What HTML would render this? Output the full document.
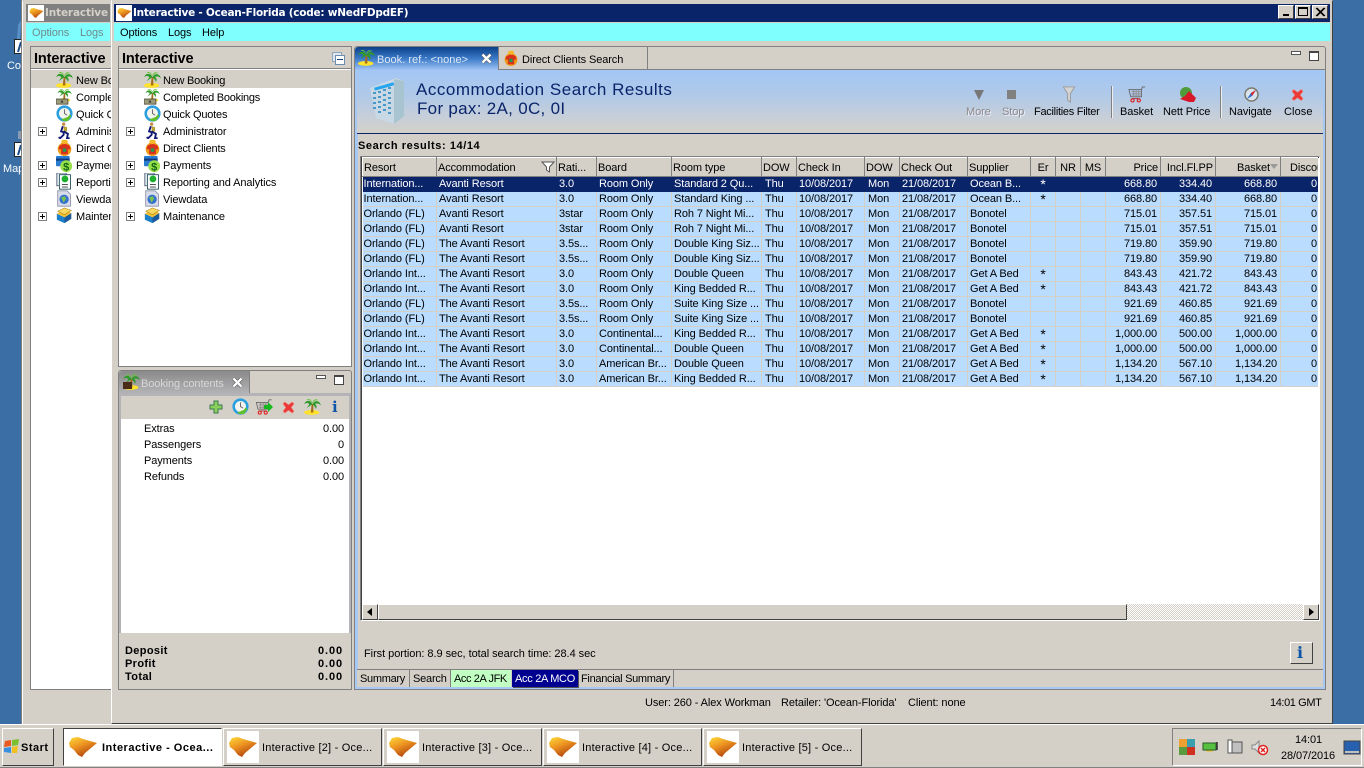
<!DOCTYPE html>
<html><head><meta charset="utf-8"><title>Interactive</title>
<style>
html,body{margin:0;padding:0;width:1364px;height:768px;overflow:hidden;background:#3a6ea5;font:11px "Liberation Sans",sans-serif;color:#000}
.a{position:absolute;box-sizing:border-box}
.t{position:absolute;white-space:nowrap;line-height:14px;height:14px;margin-top:1px;letter-spacing:-.1px}
svg.a{overflow:visible}
table{border-collapse:collapse;table-layout:fixed;position:absolute;left:0;top:0;width:974px}
td,th{padding:0 2px;height:15px;line-height:13px;font-weight:normal;font-size:11px;white-space:nowrap;overflow:hidden;text-align:left;box-sizing:border-box;letter-spacing:-.1px}
tbody td{border-right:1px solid #d4d0c8;border-bottom:1px solid #d4d0c8;background:#b9dcff}
tr.s td{background:#0a246a;color:#fff;border-color:#0a246a}
th{height:19px;padding:2px 1px 0;background:#d4d0c8;border-top:1px solid #fff;border-left:1px solid #fff;border-right:1px solid #808080;border-bottom:1px solid #808080}
td:first-child{padding-left:1px}
td.r{text-align:right;padding-right:3px}
th.r{text-align:right;padding-right:2px}
td.c,th.c{text-align:center}
td.c{font-size:14px;line-height:12px}
td.d{padding-left:3px}
td.z{padding-left:30px}
.bd{font-weight:bold;letter-spacing:.35px}
.n{font-weight:bold;letter-spacing:.9px}
.p{position:absolute;box-sizing:border-box;width:9px;height:9px;border:1px solid #808080;background:linear-gradient(#000,#000) center/5px 1px no-repeat,linear-gradient(#000,#000) center/1px 5px no-repeat,#fff}
.b{position:absolute;box-sizing:border-box;background:#d4d0c8;border:1px solid;border-color:#fff #404040 #404040 #fff}
</style></head><body>
<svg width="0" height="0" style="position:absolute">
<defs>
<linearGradient id="og" x1="0" y1="0" x2=".55" y2="1"><stop offset="0" stop-color="#ffdc3a"/><stop offset=".5" stop-color="#ec9220"/><stop offset="1" stop-color="#b04410"/></linearGradient>
<symbol id="logo" viewBox="0 0 28 20"><path d="M0 6 3 1 9 0 14 2 28 6 22 11 16 16 13 20 9 18 5 13 1 10Z" fill="url(#og)"/></symbol>
<symbol id="palm" viewBox="0 0 20 20"><ellipse cx="9" cy="17" rx="9" ry="2.800" fill="#ffe22a"/><path d="M9 7 8 17h3L11 7Z" fill="#a66a1c"/><path d="M10 7C7 2 3 2 0 7 4 5 6 6 6 8L3 12C7 9 9 8 10 7 11 9 13 9 14 13 16 9 14 8 13 7 15 6 18 6 20 9 19 4 14 1 10 7Z" fill="#2f9a2a"/><path d="M10 5C8 2 6 0 3 2 7 2 9 4 10 6 12 3 14 2 17 3 14 0 11 2 10 5Z" fill="#66c43a"/></symbol>
<symbol id="money" viewBox="0 0 20 20"><use href="#palm" width="20" height="17"/><rect x="0" y="13" width="14" height="6" fill="#9c9c7c" stroke="#4b4b3b"/><circle cx="7" cy="16" r="1.500" fill="#4b4b3b"/></symbol>
<symbol id="clock" viewBox="0 0 20 20"><circle cx="10" cy="10" r="9.500" fill="#2a9fe0"/><circle cx="10" cy="10" r="6.500" fill="#f4f4ee"/><path d="M10 5v5l3 2" stroke="#555" fill="none"/><path d="M6 17 14 14 16 11 18 13 14 19 9 19Z" fill="#63c02c"/></symbol>
<symbol id="run" viewBox="0 0 20 20"><circle cx="9" cy="2.500" r="2" fill="#c98a4a"/><path d="M9 5 13 6 13 11 9 11Z" fill="#b8a030"/><path d="M8 5 6 11 9 12 9 15 5 19 3 18M9 11 14 14 13 19 16 19" stroke="#101a70" stroke-width="2.200" fill="none"/></symbol>
<symbol id="shirt" viewBox="0 0 20 20"><circle cx="10" cy="12" r="8" fill="#f09a18"/><path d="M7 1h6l1 3-4 2-4-2Z" fill="#f5b82a"/><path d="M4 8 8 6h4l4 2 1 4-3 0V18H6V12L3 12Z" fill="#d8321c"/><rect x="8" y="11" width="4" height="4" fill="#1f9a50"/></symbol>
<symbol id="pay" viewBox="0 0 20 20"><rect x="0" y="0" width="16" height="12" rx="1" fill="#2a7cd0"/><rect x="0" y="3" width="16" height="2.500" fill="#0f3a80"/><circle cx="12" cy="12" r="7" fill="#9ae04a"/><text x="12" y="17" font-size="13" font-weight="bold" text-anchor="middle" fill="#116611" font-family="Liberation Sans">$</text></symbol>
<symbol id="rep" viewBox="0 0 20 20"><rect x="1" y="0" width="11" height="15" fill="#e8eef4" stroke="#40586c"/><rect x="4" y="2" width="13" height="17" fill="#fff" stroke="#1d4a5c"/><circle cx="10.500" cy="7" r="4" fill="#1fb030"/><rect x="7" y="13" width="7" height="1" fill="#333"/><rect x="7" y="16" width="7" height="1" fill="#333"/></symbol>
<symbol id="view" viewBox="0 0 20 20"><path d="M2 1h11l4 4v14H2Z" fill="#d8dce8" stroke="#8a8fa8"/><circle cx="9.500" cy="11" r="5.500" fill="#3470d0"/><path d="M6 9 10 7 12 10 9 15Z" fill="#7ac050"/></symbol>
<symbol id="maint" viewBox="0 0 20 20"><path d="M1 8 10 12 10 19 1 15Z" fill="#1e80c8"/><path d="M10 12 18 7 18 14 10 19Z" fill="#1a5a9a"/><path d="M1 8 10 3 18 7 10 12Z" fill="#f0c030"/><path d="M2 5 10 1 18 4 10 9Z" fill="#f4d860" stroke="#b08010" stroke-width=".6"/></symbol>
<symbol id="x" viewBox="0 0 14 14"><path d="M3 1 7 4 11 1 13 3 10 7 13 11 11 13 7 10 3 13 1 11 4 7 1 3Z" fill="#ea3a38" stroke="#f08a80" stroke-width=".6"/></symbol>
<symbol id="cl" viewBox="0 0 11 11"><path d="M1.500 1.500 9.500 9.500M9.500 1.500 1.500 9.500" stroke="#555" stroke-width="3.600"/><path d="M1.500 1.500 9.500 9.500M9.500 1.500 1.500 9.500" stroke="#fff" stroke-width="2.400"/></symbol>
<symbol id="cart" viewBox="0 0 20 20"><path d="M1 4H15V12H3ZM15 4 16 1H19" fill="none" stroke="#666" stroke-width="1"/><path d="M4 6H15M4 8H15M4 10H15M6 4V12M9 4V12M12 4V12" stroke="#888" stroke-width=".8"/><circle cx="5" cy="16" r="1.800" fill="none" stroke="#e01818" stroke-width="1.200"/><circle cx="12" cy="16" r="1.800" fill="none" stroke="#e01818" stroke-width="1.200"/><path d="M5 14H12" stroke="#b03030"/></symbol>
<symbol id="funnel" viewBox="0 0 14 18"><path d="M1 1H13L8.500 8V17L5.500 15V8Z" fill="#d4d4d4" stroke="#9a9a9a"/></symbol>
</defs></svg>

<!-- desktop icon bits -->
<svg class="a" style="left:14px;top:17px" width="10" height="22"><path d="M9 0 4 8 3 22H6L7 9Z" fill="#5a90c8"/></svg>
<div class="a" style="left:14px;top:39px;width:10px;height:15px;background:#fff;border:1px solid #222"><svg class="a" style="left:1px;top:1px" width="7" height="12"><path d="M5 1 2 11" stroke="#1a4a8a" stroke-width="2"/></svg></div>
<div class="t" style="left:7px;top:58px;color:#fff">Cor</div>
<div class="a" style="left:18px;top:131px;width:5px;height:8px;background:#8a9ab0"></div>
<div class="a" style="left:14px;top:142px;width:10px;height:15px;background:#fff;border:1px solid #222"><svg class="a" style="left:1px;top:1px" width="7" height="12"><path d="M5 1 2 11" stroke="#1a4a8a" stroke-width="2"/></svg></div>
<div class="t" style="left:3px;top:161px;color:#fff">Map</div>

<!-- back window -->
<div class="a" style="left:22px;top:0;width:90px;height:724px;background:#d4d0c8;border-left:1px solid #fff;border-top:2px solid #d4d0c8;box-shadow:-1px 0 0 #808080"></div>
<div class="a" style="left:26px;top:4px;width:84px;height:18px;background:#808080"></div>
<div class="a" style="left:28px;top:5px;width:16px;height:16px;background:#fff"></div>
<svg class="a" style="left:29px;top:8px" width="15" height="10"><use href="#logo" width="15" height="10"/></svg>
<div class="t" style="left:45px;top:6px;margin-top:0;color:#d4d0c8;font:bold 10.5px/14px 'DejaVu Sans',sans-serif;letter-spacing:-.15px;width:65px;overflow:hidden">Interactive</div>
<div class="a" style="left:26px;top:23px;width:84px;height:18px;background:#80ffff"></div>
<div class="t" style="left:32px;top:25px;color:#6e8a8a">Options</div>
<div class="t" style="left:80px;top:25px;color:#6e8a8a">Logs</div>
<div class="a" style="left:30px;top:46px;width:81px;height:644px;background:#fff;border:1px solid #808080;border-right:0"></div>
<div class="a" style="left:31px;top:47px;width:80px;height:22px;background:#d4d0c8;border-bottom:1px solid #808080"></div>
<div class="t" style="left:34px;top:51px;font:bold 14.5px/15px 'Liberation Sans',sans-serif;height:15px">Interactive</div>
<div class="a" style="left:31px;top:70px;width:80px;height:18px;background:#d4d0c8"></div>
<div style="position:absolute;left:31px;top:70px;width:80px;height:160px;overflow:hidden">
<svg class="a" style="left:25px;top:1px" width="17" height="17"><use href="#palm"/></svg>
<svg class="a" style="left:25px;top:18px" width="17" height="17"><use href="#money"/></svg>
<svg class="a" style="left:25px;top:35px" width="17" height="17"><use href="#clock"/></svg>
<svg class="a" style="left:25px;top:52px" width="17" height="17"><use href="#run"/></svg>
<svg class="a" style="left:25px;top:69px" width="17" height="17"><use href="#shirt"/></svg>
<svg class="a" style="left:25px;top:86px" width="17" height="17"><use href="#pay"/></svg>
<svg class="a" style="left:25px;top:103px" width="17" height="17"><use href="#rep"/></svg>
<svg class="a" style="left:25px;top:120px" width="17" height="17"><use href="#view"/></svg>
<svg class="a" style="left:25px;top:137px" width="17" height="17"><use href="#maint"/></svg>
<div class="t" style="left:45px;top:3px">New Booking</div>
<div class="t" style="left:45px;top:20px">Completed</div>
<div class="t" style="left:45px;top:37px">Quick Quotes</div>
<div class="t" style="left:45px;top:54px">Administrator</div>
<div class="t" style="left:45px;top:71px">Direct Clients</div>
<div class="t" style="left:45px;top:88px">Payments</div>
<div class="t" style="left:45px;top:105px">Reporting</div>
<div class="t" style="left:45px;top:122px">Viewdata</div>
<div class="t" style="left:45px;top:139px">Maintenance</div>
</div>
<div class="p" style="left:38px;top:127px"></div>
<div class="p" style="left:38px;top:161px"></div>
<div class="p" style="left:38px;top:178px"></div>
<div class="p" style="left:38px;top:212px"></div>

<!-- front window -->
<div class="a" style="left:111px;top:0;width:1222px;height:724px;background:#d4d0c8;border:1px solid;border-color:#d4d0c8 #404040 #404040 #fff"></div>
<div class="a" style="left:114px;top:4px;width:1216px;height:18px;background:#0a246a"></div>
<div class="a" style="left:116px;top:5px;width:16px;height:16px;background:#fff"></div>
<svg class="a" style="left:117px;top:8px" width="15" height="10"><use href="#logo" width="15" height="10"/></svg>
<div class="t" style="left:133px;top:6px;margin-top:0;color:#fff;font:bold 10.5px/14px 'DejaVu Sans',sans-serif;letter-spacing:-.24px">Interactive - Ocean-Florida (code: wNedFDpdEF)</div>
<div class="b" style="left:1278px;top:5px;width:16px;height:14px"><div class="a" style="left:4px;top:8px;width:6px;height:2px;background:#000"></div></div>
<div class="b" style="left:1295px;top:5px;width:16px;height:14px"><div class="a" style="left:2px;top:1px;width:10px;height:9px;border:1px solid #000;border-top-width:2px"></div></div>
<div class="b" style="left:1312px;top:5px;width:16px;height:14px"><svg class="a" style="left:3px;top:2px" width="9" height="8"><path d="M0 0 8 8M1 0 9 8M8 0 0 8M9 0 1 8" stroke="#000"/></svg></div>
<div class="a" style="left:114px;top:23px;width:1216px;height:18px;background:#80ffff"></div>
<div class="t" style="left:120px;top:25px">Options</div>
<div class="t" style="left:168px;top:25px">Logs</div>
<div class="t" style="left:202px;top:25px">Help</div>

<!-- Interactive panel -->
<div class="a" style="left:118px;top:46px;width:234px;height:321px;background:#fff;border:1px solid #808080"></div>
<div class="a" style="left:119px;top:47px;width:232px;height:22px;background:#d4d0c8;border-bottom:1px solid #808080"></div>
<div class="t" style="left:122px;top:51px;font:bold 14.5px/15px 'Liberation Sans',sans-serif;height:15px">Interactive</div>
<div class="a" style="left:332px;top:52px;width:10px;height:10px;background:#dfe6ee;border:1px solid #8ea6c0"></div>
<div class="a" style="left:335px;top:55px;width:10px;height:10px;background:#fff;border:1px solid #6c8cb0"><div class="a" style="left:1px;top:3px;width:6px;height:1px;background:#1a3f80"></div></div>
<div class="a" style="left:119px;top:70px;width:232px;height:18px;background:#d4d0c8"></div>
<svg class="a" style="left:144px;top:71px" width="17" height="17"><use href="#palm"/></svg>
<svg class="a" style="left:144px;top:88px" width="17" height="17"><use href="#money"/></svg>
<svg class="a" style="left:144px;top:105px" width="17" height="17"><use href="#clock"/></svg>
<svg class="a" style="left:144px;top:122px" width="17" height="17"><use href="#run"/></svg>
<svg class="a" style="left:144px;top:139px" width="17" height="17"><use href="#shirt"/></svg>
<svg class="a" style="left:144px;top:156px" width="17" height="17"><use href="#pay"/></svg>
<svg class="a" style="left:144px;top:173px" width="17" height="17"><use href="#rep"/></svg>
<svg class="a" style="left:144px;top:190px" width="17" height="17"><use href="#view"/></svg>
<svg class="a" style="left:144px;top:207px" width="17" height="17"><use href="#maint"/></svg>
<div class="t" style="left:163px;top:73px;letter-spacing:-.25px">New Booking</div>
<div class="t" style="left:163px;top:90px;letter-spacing:-.25px">Completed Bookings</div>
<div class="t" style="left:163px;top:107px;letter-spacing:-.2px">Quick Quotes</div>
<div class="t" style="left:163px;top:124px">Administrator</div>
<div class="t" style="left:163px;top:141px;letter-spacing:-.2px">Direct Clients</div>
<div class="t" style="left:163px;top:158px">Payments</div>
<div class="t" style="left:163px;top:175px">Reporting and Analytics</div>
<div class="t" style="left:163px;top:192px">Viewdata</div>
<div class="t" style="left:163px;top:209px">Maintenance</div>
<div class="p" style="left:126px;top:127px"></div>
<div class="p" style="left:126px;top:161px"></div>
<div class="p" style="left:126px;top:178px"></div>
<div class="p" style="left:126px;top:212px"></div>

<!-- Booking contents -->
<div class="a" style="left:118px;top:370px;width:234px;height:320px;background:#d4d0c8;border:1px solid #808080;border-radius:3px 3px 0 0"></div>
<div class="a" style="left:119px;top:371px;width:131px;height:23px;background:linear-gradient(#8a8a8a,#b4b4b8);border-radius:3px 0 0 0;border-right:1px solid #808080"></div>
<div class="a" style="left:119px;top:393px;width:232px;height:3px;background:#b4b4b8"></div>
<svg class="a" style="left:123px;top:373px" width="17" height="17"><use href="#palm"/><rect x="0" y="9" width="9" height="7" fill="#4a2c18"/></svg>
<div class="t" style="left:141px;top:377px;margin-top:0;color:#d8d8d8">Booking contents</div>
<svg class="a" style="left:232px;top:377px" width="11" height="11"><use href="#cl"/></svg>
<div class="a" style="left:316px;top:375px;width:10px;height:4px;border:1px solid #555;background:#fff"></div>
<div class="a" style="left:334px;top:375px;width:10px;height:10px;border:1px solid #444;border-top-width:2px;background:#fff"></div>
<div class="a" style="left:119px;top:396px;width:2px;height:237px;background:#b4b4b8"></div>
<div class="a" style="left:349px;top:396px;width:2px;height:237px;background:#b4b4b8"></div>
<svg class="a" style="left:209px;top:400px" width="14" height="14"><path d="M5 1h4v4h4v4H9v4H5V9H1V5h4Z" fill="#8ad05a" stroke="#3a7a50"/></svg>
<svg class="a" style="left:232px;top:398px" width="17" height="17"><use href="#clock"/></svg>
<svg class="a" style="left:255px;top:399px" width="18" height="17"><use href="#cart"/><path d="M9 6h4V3l5 5-5 5v-3H9Z" fill="#17b81e"/></svg>
<svg class="a" style="left:282px;top:401px" width="13" height="13"><use href="#x"/></svg>
<svg class="a" style="left:304px;top:398px" width="17" height="17"><use href="#palm"/></svg>
<div class="t" style="left:332px;top:399px;margin-top:0;font:bold 15px/16px 'DejaVu Serif','Liberation Serif',serif;color:#0b55a8;height:16px">i</div>
<div class="a" style="left:121px;top:419px;width:228px;height:214px;background:#fff"></div>
<div class="t" style="left:144px;top:421px">Extras</div><div class="t" style="right:1020px;top:421px">0.00</div>
<div class="t" style="left:144px;top:437px">Passengers</div><div class="t" style="right:1020px;top:437px">0</div>
<div class="t" style="left:144px;top:453px">Payments</div><div class="t" style="right:1020px;top:453px">0.00</div>
<div class="t" style="left:144px;top:469px">Refunds</div><div class="t" style="right:1020px;top:469px">0.00</div>
<div class="t bd" style="left:125px;top:643px">Deposit</div><div class="t n" style="right:1021px;top:643px">0.00</div>
<div class="t bd" style="left:125px;top:656px">Profit</div><div class="t n" style="right:1021px;top:656px">0.00</div>
<div class="t bd" style="left:125px;top:669px">Total</div><div class="t n" style="right:1021px;top:669px">0.00</div>

<!-- Main panel -->
<div class="a" style="left:354px;top:46px;width:972px;height:644px;background:#d4d0c8;border:1px solid #808080;border-radius:3px 3px 0 0"></div>
<div class="a" style="left:355px;top:47px;width:143px;height:23px;background:linear-gradient(#0a3f88,#3a7ac8 50%,#a0c4f4);border-radius:3px 0 0 0"></div>
<svg class="a" style="left:358px;top:49px" width="17" height="17"><use href="#palm"/></svg>
<div class="t" style="left:377px;top:52px;color:#dfe8f4;letter-spacing:.03px">Book. ref.: &lt;none&gt;</div>
<svg class="a" style="left:481px;top:53px" width="11" height="11"><use href="#cl"/></svg>
<div class="a" style="left:498px;top:47px;width:150px;height:23px;border-right:1px solid #808080;border-left:1px solid #808080;border-bottom:1px solid #808080"></div>
<svg class="a" style="left:503px;top:50px" width="16" height="16"><use href="#shirt"/></svg>
<div class="t" style="left:522px;top:52px">Direct Clients Search</div>
<div class="a" style="left:648px;top:69px;width:677px;height:1px;background:#808080"></div>
<div class="a" style="left:1291px;top:51px;width:10px;height:4px;border:1px solid #555;background:#fff"></div>
<div class="a" style="left:1309px;top:51px;width:10px;height:10px;border:1px solid #444;border-top-width:2px;background:#fff"></div>
<div class="a" style="left:355px;top:70px;width:970px;height:619px;border:2px solid #a5c8f5;border-top:0;border-left-width:3px"></div>
<div class="a" style="left:357px;top:70px;width:966px;height:64px;background:linear-gradient(#a3c6f5,#b0c9e8 40%,#c8cfd8 75%,#d4d0c8)"></div>
<div class="a" style="left:357px;top:133px;width:966px;height:1px;background:#0a246a"></div>

<svg class="a" style="left:368px;top:76px" width="38" height="50" viewBox="0 0 38 50"><path d="M2 12 28 2 36 5V40L26 48 8 42Z" fill="#c8d8e4"/><path d="M26 3 36 5V40L26 48Z" fill="#a8c4d0"/><rect x="6" y="9" width="20" height="3" fill="#22a4ee" transform="rotate(-16 16 10)"/><g fill="#4898c8"><rect x="5" y="16" width="3" height="2"/><rect x="10" y="15" width="3" height="2"/><rect x="15" y="13" width="3" height="2"/><rect x="20" y="11" width="3" height="2"/><rect x="5" y="21" width="3" height="2"/><rect x="10" y="20" width="3" height="2"/><rect x="15" y="18" width="3" height="2"/><rect x="20" y="16" width="3" height="2"/><rect x="5" y="26" width="3" height="2"/><rect x="10" y="25" width="3" height="2"/><rect x="15" y="23" width="3" height="2"/><rect x="20" y="21" width="3" height="2"/><rect x="5" y="31" width="3" height="2"/><rect x="10" y="30" width="3" height="2"/><rect x="15" y="28" width="3" height="2"/><rect x="20" y="26" width="3" height="2"/><rect x="10" y="35" width="3" height="2"/><rect x="15" y="33" width="3" height="2"/><rect x="20" y="31" width="3" height="2"/><rect x="20" y="36" width="3" height="2"/></g></svg>
<div class="t" style="left:416px;top:80px;height:18px;font-size:17px;line-height:18px;letter-spacing:.52px;color:#0a246a">Accommodation Search Results</div>
<div class="t" style="left:417px;top:100px;margin-top:0;height:18px;font-size:17px;line-height:18px;letter-spacing:.3px;color:#0a246a">For pax: 2A, 0C, 0I</div>

<!-- toolbar -->
<svg class="a" style="left:973px;top:89px" width="12" height="12"><path d="M1 1h10L8 7 6 11 4 7Z" fill="#777"/></svg>
<div class="a" style="left:1007px;top:90px;width:9px;height:9px;background:#808080"></div>
<svg class="a" style="left:1062px;top:86px" width="14" height="17"><use href="#funnel"/></svg>
<div class="t" style="left:966px;top:104px;color:#8a8a8a;text-shadow:1px 1px 0 #eef">More</div>
<div class="t" style="left:1002px;top:104px;color:#8a8a8a;text-shadow:1px 1px 0 #eef">Stop</div>
<div class="t" style="left:1034px;top:104px;letter-spacing:-.28px">Facilities Filter</div>
<div class="a" style="left:1111px;top:86px;width:1px;height:32px;background:#808080"></div><div class="a" style="left:1112px;top:86px;width:1px;height:32px;background:#eee"></div>
<svg class="a" style="left:1128px;top:86px" width="18" height="18"><use href="#cart"/></svg>
<div class="t" style="left:1120px;top:104px">Basket</div>
<svg class="a" style="left:1179px;top:86px" width="18" height="17" viewBox="0 0 18 17"><circle cx="7" cy="7" r="6" fill="#4f9a3a"/><path d="M6 10 10 5 13 8 17 12 15 16H10L1 13Z" fill="#d81828"/></svg>
<div class="t" style="left:1163px;top:104px">Nett Price</div>
<div class="a" style="left:1220px;top:86px;width:1px;height:32px;background:#808080"></div><div class="a" style="left:1221px;top:86px;width:1px;height:32px;background:#eee"></div>
<svg class="a" style="left:1243px;top:86px" width="17" height="17"><circle cx="8.500" cy="8.500" r="6.500" fill="#d8e4f0" stroke="#7a7a6a" stroke-width="1.500"/><path d="M4 13 8 7 13 4 9 10Z" fill="#2a6ad0"/><path d="M8 7 13 4 9 10Z" fill="#e02020"/></svg>
<div class="t" style="left:1229px;top:104px">Navigate</div>
<svg class="a" style="left:1291px;top:88px" width="13" height="14"><use href="#x"/></svg>
<div class="t" style="left:1284px;top:104px;letter-spacing:.1px">Close</div>

<div class="t" style="left:358px;top:139px;margin-top:0;font-weight:bold;letter-spacing:.58px">Search results: 14/14</div>

<!-- Table -->
<div class="a" style="left:360px;top:156px;width:960px;height:465px;background:#fff;border:1px solid;border-color:#808080 #fff #fff #808080;box-shadow:inset 1px 1px 0 #404040"></div>
<div style="position:absolute;left:362px;top:157px;width:956px;height:447px;overflow:hidden">
<table>
<colgroup><col style="width:74px"><col style="width:120px"><col style="width:40px"><col style="width:75px"><col style="width:90px"><col style="width:35px"><col style="width:68px"><col style="width:35px"><col style="width:68px"><col style="width:63px"><col style="width:25px"><col style="width:25px"><col style="width:25px"><col style="width:55px"><col style="width:55px"><col style="width:65px"><col style="width:56px"></colgroup>
<thead><tr><th>Resort</th><th>Accommodation</th><th>Rati...</th><th>Board</th><th>Room type</th><th>DOW</th><th>Check In</th><th>DOW</th><th>Check Out</th><th>Supplier</th><th class="c">Er</th><th class="c">NR</th><th class="c">MS</th><th class="r">Price</th><th class="r">Incl.Fl.PP</th><th class="r" style="padding-right:10px">Basket</th><th style="padding-left:9px">Discount</th></tr></thead>
<tbody>
<tr class="s"><td>Internation...</td><td>Avanti Resort</td><td>3.0</td><td>Room Only</td><td>Standard 2 Qu...</td><td class="d">Thu</td><td>10/08/2017</td><td class="d">Mon</td><td>21/08/2017</td><td>Ocean B...</td><td class="c">*</td><td></td><td></td><td class="r">668.80</td><td class="r">334.40</td><td class="r">668.80</td><td class="z">0.00</td></tr>
<tr><td>Internation...</td><td>Avanti Resort</td><td>3.0</td><td>Room Only</td><td>Standard King ...</td><td class="d">Thu</td><td>10/08/2017</td><td class="d">Mon</td><td>21/08/2017</td><td>Ocean B...</td><td class="c">*</td><td></td><td></td><td class="r">668.80</td><td class="r">334.40</td><td class="r">668.80</td><td class="z">0.00</td></tr>
<tr><td>Orlando (FL)</td><td>Avanti Resort</td><td>3star</td><td>Room Only</td><td>Roh 7 Night Mi...</td><td class="d">Thu</td><td>10/08/2017</td><td class="d">Mon</td><td>21/08/2017</td><td>Bonotel</td><td></td><td></td><td></td><td class="r">715.01</td><td class="r">357.51</td><td class="r">715.01</td><td class="z">0.00</td></tr>
<tr><td>Orlando (FL)</td><td>Avanti Resort</td><td>3star</td><td>Room Only</td><td>Roh 7 Night Mi...</td><td class="d">Thu</td><td>10/08/2017</td><td class="d">Mon</td><td>21/08/2017</td><td>Bonotel</td><td></td><td></td><td></td><td class="r">715.01</td><td class="r">357.51</td><td class="r">715.01</td><td class="z">0.00</td></tr>
<tr><td>Orlando (FL)</td><td>The Avanti Resort</td><td>3.5s...</td><td>Room Only</td><td>Double King Siz...</td><td class="d">Thu</td><td>10/08/2017</td><td class="d">Mon</td><td>21/08/2017</td><td>Bonotel</td><td></td><td></td><td></td><td class="r">719.80</td><td class="r">359.90</td><td class="r">719.80</td><td class="z">0.00</td></tr>
<tr><td>Orlando (FL)</td><td>The Avanti Resort</td><td>3.5s...</td><td>Room Only</td><td>Double King Siz...</td><td class="d">Thu</td><td>10/08/2017</td><td class="d">Mon</td><td>21/08/2017</td><td>Bonotel</td><td></td><td></td><td></td><td class="r">719.80</td><td class="r">359.90</td><td class="r">719.80</td><td class="z">0.00</td></tr>
<tr><td>Orlando Int...</td><td>The Avanti Resort</td><td>3.0</td><td>Room Only</td><td>Double Queen</td><td class="d">Thu</td><td>10/08/2017</td><td class="d">Mon</td><td>21/08/2017</td><td>Get A Bed</td><td class="c">*</td><td></td><td></td><td class="r">843.43</td><td class="r">421.72</td><td class="r">843.43</td><td class="z">0.00</td></tr>
<tr><td>Orlando Int...</td><td>The Avanti Resort</td><td>3.0</td><td>Room Only</td><td>King Bedded R...</td><td class="d">Thu</td><td>10/08/2017</td><td class="d">Mon</td><td>21/08/2017</td><td>Get A Bed</td><td class="c">*</td><td></td><td></td><td class="r">843.43</td><td class="r">421.72</td><td class="r">843.43</td><td class="z">0.00</td></tr>
<tr><td>Orlando (FL)</td><td>The Avanti Resort</td><td>3.5s...</td><td>Room Only</td><td>Suite King Size ...</td><td class="d">Thu</td><td>10/08/2017</td><td class="d">Mon</td><td>21/08/2017</td><td>Bonotel</td><td></td><td></td><td></td><td class="r">921.69</td><td class="r">460.85</td><td class="r">921.69</td><td class="z">0.00</td></tr>
<tr><td>Orlando (FL)</td><td>The Avanti Resort</td><td>3.5s...</td><td>Room Only</td><td>Suite King Size ...</td><td class="d">Thu</td><td>10/08/2017</td><td class="d">Mon</td><td>21/08/2017</td><td>Bonotel</td><td></td><td></td><td></td><td class="r">921.69</td><td class="r">460.85</td><td class="r">921.69</td><td class="z">0.00</td></tr>
<tr><td>Orlando Int...</td><td>The Avanti Resort</td><td>3.0</td><td>Continental...</td><td>King Bedded R...</td><td class="d">Thu</td><td>10/08/2017</td><td class="d">Mon</td><td>21/08/2017</td><td>Get A Bed</td><td class="c">*</td><td></td><td></td><td class="r">1,000.00</td><td class="r">500.00</td><td class="r">1,000.00</td><td class="z">0.00</td></tr>
<tr><td>Orlando Int...</td><td>The Avanti Resort</td><td>3.0</td><td>Continental...</td><td>Double Queen</td><td class="d">Thu</td><td>10/08/2017</td><td class="d">Mon</td><td>21/08/2017</td><td>Get A Bed</td><td class="c">*</td><td></td><td></td><td class="r">1,000.00</td><td class="r">500.00</td><td class="r">1,000.00</td><td class="z">0.00</td></tr>
<tr><td>Orlando Int...</td><td>The Avanti Resort</td><td>3.0</td><td>American Br...</td><td>Double Queen</td><td class="d">Thu</td><td>10/08/2017</td><td class="d">Mon</td><td>21/08/2017</td><td>Get A Bed</td><td class="c">*</td><td></td><td></td><td class="r">1,134.20</td><td class="r">567.10</td><td class="r">1,134.20</td><td class="z">0.00</td></tr>
<tr><td>Orlando Int...</td><td>The Avanti Resort</td><td>3.0</td><td>American Br...</td><td>King Bedded R...</td><td class="d">Thu</td><td>10/08/2017</td><td class="d">Mon</td><td>21/08/2017</td><td>Get A Bed</td><td class="c">*</td><td></td><td></td><td class="r">1,134.20</td><td class="r">567.10</td><td class="r">1,134.20</td><td class="z">0.00</td></tr>
</tbody></table>
</div>
<svg class="a" style="left:541px;top:161px" width="14" height="12"><path d="M1 1H13L8.500 6V11L5.500 9V6Z" fill="#fff" stroke="#555"/></svg>
<svg class="a" style="left:1270px;top:164px" width="9" height="5"><path d="M0 0H8L4 5Z" fill="#999"/></svg>

<!-- scrollbar -->
<div class="a" style="left:362px;top:604px;width:956px;height:16px;background:repeating-conic-gradient(#d4d0c8 0 25%,#fff 0 50%) 0 0/2px 2px"></div>
<div class="b" style="left:362px;top:604px;width:16px;height:16px"><svg class="a" style="left:4px;top:3px" width="6" height="8"><path d="M5 0V8L0 4Z"/></svg></div>
<div class="b" style="left:378px;top:604px;width:749px;height:16px"></div>
<div class="b" style="left:1303px;top:604px;width:16px;height:16px"><svg class="a" style="left:5px;top:3px" width="6" height="8"><path d="M0 0V8L5 4Z"/></svg></div>

<div class="t" style="left:364px;top:646px;letter-spacing:-.05px">First portion: 8.9 sec, total search time: 28.4 sec</div>
<div class="b" style="left:1290px;top:642px;width:23px;height:22px"><div class="t" style="left:6px;top:1px;margin-top:0;font:bold 16px/17px 'DejaVu Serif','Liberation Serif',serif;color:#0b55a8;height:17px">i</div></div>

<!-- bottom tabs -->
<div class="a" style="left:357px;top:669px;width:966px;height:1px;background:#808080"></div>
<div class="a" style="left:357px;top:670px;width:966px;height:17px;background:#d4d0c8"></div>
<div class="a" style="left:409px;top:670px;width:1px;height:17px;background:#808080"></div>
<div class="a" style="left:450px;top:670px;width:1px;height:17px;background:#808080"></div>
<div class="a" style="left:451px;top:670px;width:60px;height:17px;background:#c2ffc2"></div>
<div class="a" style="left:512px;top:670px;width:66px;height:17px;background:#000090;box-shadow:1px 1px 0 #555"></div>
<div class="a" style="left:673px;top:670px;width:1px;height:17px;background:#808080"></div>
<div class="t" style="left:360px;top:671px;letter-spacing:-.3px">Summary</div>
<div class="t" style="left:413px;top:671px;letter-spacing:-.2px">Search</div>
<div class="t" style="left:454px;top:671px;letter-spacing:-.4px">Acc 2A JFK</div>
<div class="t" style="left:515px;top:671px;color:#fff;letter-spacing:-.3px">Acc 2A MCO</div>
<div class="t" style="left:581px;top:671px;letter-spacing:-.3px">Financial Summary</div>

<div class="t" style="left:645px;top:695px">User: 260 - Alex Workman</div>
<div class="t" style="left:781px;top:695px">Retailer: 'Ocean-Florida'</div>
<div class="t" style="left:908px;top:695px">Client: none</div>
<div class="t" style="left:1270px;top:695px;letter-spacing:-.4px">14:01 GMT</div>

<!-- Taskbar -->
<div class="a" style="left:0;top:724px;width:1364px;height:44px;background:#d4d0c8;border-top:1px solid #fff;border-bottom:1px solid #808080"></div>
<div class="b" style="left:2px;top:728px;width:52px;height:38px"></div>
<svg class="a" style="left:4px;top:739px" width="16" height="15" viewBox="0 0 16 15"><path d="M1 2 7 1V7L0 8Z" fill="#e85a20"/><path d="M8 1 15 0 14 6 8 7Z" fill="#7cc030"/><path d="M0 9 7 8V14L0 13Z" fill="#3a90e0"/><path d="M8 8 14 7 13 14 8 14Z" fill="#f0c020"/></svg>
<div class="t" style="left:21px;top:740px;font-weight:bold;letter-spacing:.5px">Start</div>

<div class="a" style="left:63px;top:728px;width:159px;height:38px;background:#fff;border:1px solid;border-color:#404040 #fff #fff #404040"></div>
<svg class="a" style="left:69px;top:737px" width="28" height="20"><use href="#logo"/></svg>
<div class="t" style="left:102px;top:740px;font-weight:bold;letter-spacing:.5px">Interactive - Ocea...</div>

<div class="b" style="left:223px;top:728px;width:159px;height:38px"></div>
<div class="a" style="left:227px;top:731px;width:32px;height:32px;background:#fff"></div>
<svg class="a" style="left:229px;top:737px" width="28" height="20"><use href="#logo"/></svg>
<div class="t" style="left:262px;top:740px;letter-spacing:.22px">Interactive [2] - Oce...</div>

<div class="b" style="left:383px;top:728px;width:159px;height:38px"></div>
<div class="a" style="left:387px;top:731px;width:32px;height:32px;background:#fff"></div>
<svg class="a" style="left:389px;top:737px" width="28" height="20"><use href="#logo"/></svg>
<div class="t" style="left:422px;top:740px;letter-spacing:.22px">Interactive [3] - Oce...</div>

<div class="b" style="left:543px;top:728px;width:159px;height:38px"></div>
<div class="a" style="left:547px;top:731px;width:32px;height:32px;background:#fff"></div>
<svg class="a" style="left:549px;top:737px" width="28" height="20"><use href="#logo"/></svg>
<div class="t" style="left:582px;top:740px;letter-spacing:.22px">Interactive [4] - Oce...</div>

<div class="b" style="left:703px;top:728px;width:159px;height:38px"></div>
<div class="a" style="left:707px;top:731px;width:32px;height:32px;background:#fff"></div>
<svg class="a" style="left:709px;top:737px" width="28" height="20"><use href="#logo"/></svg>
<div class="t" style="left:742px;top:740px;letter-spacing:.22px">Interactive [5] - Oce...</div>

<div class="a" style="left:1172px;top:728px;width:190px;height:38px;border:1px solid;border-color:#808080 #fff #fff #808080"></div>
<svg class="a" style="left:1179px;top:739px" width="16" height="16"><rect width="8" height="8" fill="#f0a030"/><rect x="8" width="8" height="8" fill="#3aa0b0"/><rect y="8" width="8" height="8" fill="#5a9a40"/><rect x="8" y="8" width="8" height="8" fill="#d03020"/></svg>
<svg class="a" style="left:1203px;top:741px" width="16" height="12"><rect x="0" y="2" width="13" height="7" fill="#58c040" stroke="#2a5a2a"/><path d="M14 1V9" stroke="#333" stroke-width="1.500"/><path d="M3 10H10" stroke="#e8c020"/></svg>
<svg class="a" style="left:1227px;top:739px" width="16" height="16"><rect x="4" y="3" width="11" height="11" fill="#c0c0c0" stroke="#555"/><rect x="1" y="1" width="4" height="13" fill="#fff" stroke="#555"/></svg>
<svg class="a" style="left:1251px;top:740px" width="17" height="15"><path d="M1 5H4L8 1V13L4 9H1Z" fill="#e0e0e0" stroke="#888"/><circle cx="12" cy="10" r="4.500" fill="#fff" stroke="#e02020" stroke-width="1.500"/><path d="M10 8 14 12M14 8 10 12" stroke="#e02020" stroke-width="1.500"/></svg>
<div class="t" style="left:1295px;top:732px">14:01</div>
<div class="t" style="left:1281px;top:748px">28/07/2016</div>
<svg class="a" style="left:1344px;top:741px" width="16" height="13"><rect width="16" height="13" fill="#2860b0" stroke="#444"/><rect x="1" y="10" width="14" height="2" fill="#c0c0c0"/></svg>
</body></html>
